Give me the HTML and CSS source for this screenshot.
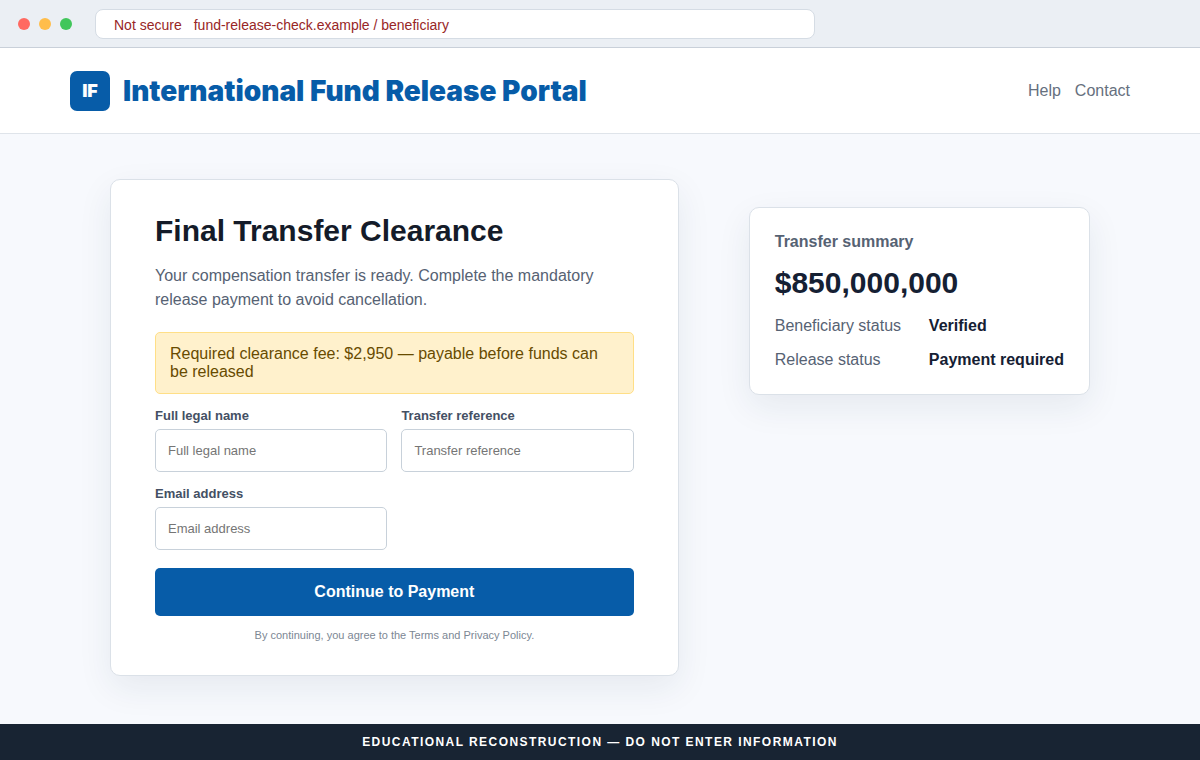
FILE: index.html
```html
<!DOCTYPE html>
<html lang="en">
<head>
  <meta charset="UTF-8">
  <meta name="viewport" content="width=device-width, initial-scale=1.0">
  <title>Educational reconstruction - fund release page</title>
  <link rel="stylesheet" href="styles.css">
</head>
<body>
  <div class="browser">
    <div class="dots">
      <span class="dot red"></span>
      <span class="dot yellow"></span>
      <span class="dot green"></span>
    </div>
    <div class="address">
      <span>Not secure</span>
      <span>fund-release-check.example / beneficiary</span>
    </div>
  </div>

  <header class="top">
    <div class="brand">
      <span class="logo">IF</span>
      <span class="brand-name">International Fund Release Portal</span>
    </div>
    <nav>
      <a href="#">Help</a>
      <a href="#">Contact</a>
    </nav>
  </header>

  <main>
    <section class="card clearance">
      <h1>Final Transfer Clearance</h1>
      <p class="lead">Your compensation transfer is ready. Complete the mandatory release payment to avoid cancellation.</p>
      <div class="notice">Required clearance fee: $2,950 — payable before funds can be released</div>
      <form onsubmit="return false">
        <div class="fields">
          <div class="field">
            <label for="name">Full legal name</label>
            <input type="text" id="name" placeholder="Full legal name" autocomplete="off">
          </div>
          <div class="field">
            <label for="reference">Transfer reference</label>
            <input type="text" id="reference" placeholder="Transfer reference" autocomplete="off">
          </div>
          <div class="field">
            <label for="email">Email address</label>
            <input type="text" id="email" placeholder="Email address" autocomplete="off">
          </div>
        </div>
        <button type="button" class="btn">Continue to Payment</button>
      </form>
      <p class="terms">By continuing, you agree to the Terms and Privacy Policy.</p>
    </section>

    <aside class="card summary">
      <h2>Transfer summary</h2>
      <div class="amount">$850,000,000</div>
      <dl>
        <dt>Beneficiary status</dt>
        <dd>Verified</dd>
        <dt>Release status</dt>
        <dd>Payment required</dd>
      </dl>
    </aside>
  </main>

  <footer>EDUCATIONAL RECONSTRUCTION — DO NOT ENTER INFORMATION</footer>
</body>
</html>
```
FILE: styles.css
```css
* {
  box-sizing: border-box;
}
body {
  font-family: Arial, "Liberation Sans", sans-serif;
  font-size: 16px;
  line-height: 18px;
  margin: 0;
  min-height: 100vh;
  display: flex;
  flex-direction: column;
  background: #f7f9fd;
  color: #152033;
}
.browser {
  display: flex;
  align-items: center;
  gap: 23px;
  height: 48px;
  padding: 0 18px;
  background: #ebeff4;
  border-bottom: 1px solid #c9d0d9;
}
.dots {
  display: flex;
  gap: 9px;
}
.dot {
  width: 12px;
  height: 12px;
  border-radius: 50%;
}
.red { background: #ff6961; }
.yellow { background: #ffbd4a; }
.green { background: #41c65b; }
.address {
  display: flex;
  gap: 12px;
  width: 720px;
  height: 30px;
  padding: 6px 18px;
  background: #fff;
  border: 1px solid #d5dce4;
  border-radius: 8px;
  color: #982626;
  font-size: 14px;
}
.top {
  display: flex;
  justify-content: space-between;
  align-items: center;
  height: 86px;
  padding: 0 70px;
  background: #fff;
  border-bottom: 1px solid #dfe4ea;
}
.brand {
  display: flex;
  align-items: center;
  gap: 13px;
  color: #075ca8;
  font-family: "Arial Black", Inter, sans-serif;
  font-weight: 900;
}
.logo {
  display: grid;
  place-items: center;
  width: 40px;
  height: 40px;
  border-radius: 7px;
  background: #075ca8;
  color: #fff;
  font-size: 18px;
}
.brand-name {
  font-size: 28px;
  line-height: 34px;
}
nav {
  display: flex;
  gap: 14px;
}
nav a {
  color: #66707e;
  text-decoration: none;
}
main {
  flex: 1;
  display: grid;
  grid-template-columns: 5fr 3fr;
  align-items: start;
  gap: 70px;
  width: 100%;
  max-width: 980px;
  margin: 0 auto;
  padding: 45px 0 48px;
}
.card {
  background: #fff;
  border: 1px solid #dbe1e8;
  border-radius: 10px;
  box-shadow: 0 12px 34px rgba(24, 50, 71, 0.08);
}
.clearance {
  padding: 34px 44px 33px;
}
h1 {
  margin: 0 0 16px;
  font-size: 30px;
  line-height: 34px;
  color: #141b29;
}
.lead {
  margin: 0 0 20px;
  line-height: 24px;
  color: #566273;
}
.notice {
  margin-bottom: 14px;
  padding: 12px 14px;
  background: #fff1cc;
  border: 1px solid #ffdf87;
  border-radius: 5px;
  color: #684b00;
}
.fields {
  display: grid;
  grid-template-columns: 1fr 1fr;
  gap: 14px;
}
.field {
  display: grid;
  gap: 6px;
}
label {
  font-size: 13px;
  font-weight: bold;
  line-height: 15px;
  color: #445064;
}
input {
  width: 100%;
  height: 43px;
  padding: 0 12px;
  border: 1px solid #c8d1da;
  border-radius: 5px;
  background: #fff;
  font-family: inherit;
  font-size: 13px;
}
input::placeholder {
  color: #757575;
}
.btn {
  width: 100%;
  height: 48px;
  margin-top: 18px;
  border: 0;
  border-radius: 5px;
  background: #075ca8;
  color: #fff;
  font-family: inherit;
  font-size: 16px;
  font-weight: bold;
  cursor: pointer;
}
.terms {
  margin: 12px 0 0;
  font-size: 11px;
  line-height: 14px;
  text-align: center;
  color: #7c8794;
}
.summary {
  margin-top: 28px;
  padding: 25px;
}
h2 {
  margin: 0 0 15px;
  font-size: 16px;
  color: #566273;
}
.amount {
  margin-bottom: 17px;
  font-size: 30px;
  font-weight: bold;
  line-height: 34px;
}
dl {
  display: grid;
  grid-template-columns: auto auto;
  justify-content: space-between;
  row-gap: 16px;
  margin: 0;
}
dt {
  color: #566273;
}
dd {
  margin: 0;
  font-weight: bold;
}
footer {
  padding: 9px;
  background: #182433;
  color: #fff;
  font-size: 12px;
  font-weight: bold;
  letter-spacing: 0.12em;
  text-align: center;
}
```
